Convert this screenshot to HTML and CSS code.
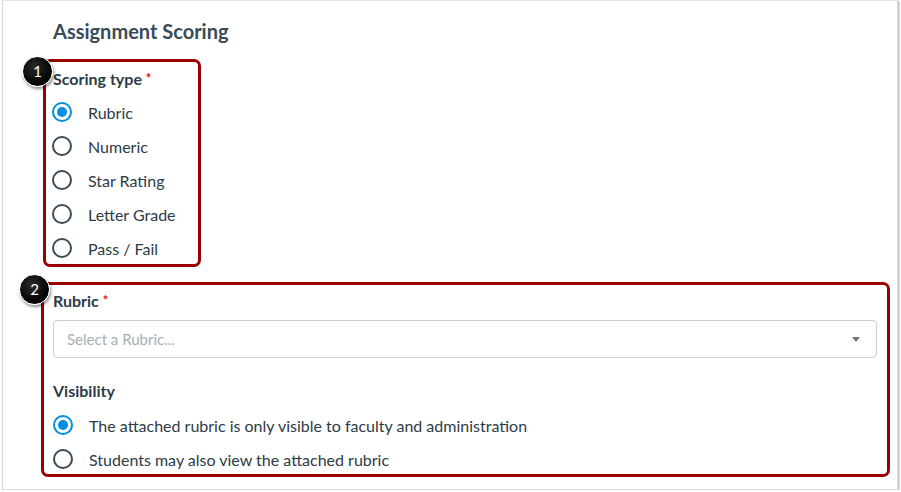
FILE: index.html
```html
<!DOCTYPE html>
<html lang="en">
<head>
<meta charset="utf-8">
<title>Assignment Scoring</title>
<link rel="stylesheet" href="styles.css">
</head>
<body>
<div class="card">
  <h2 class="title">Assignment Scoring</h2>

  <div class="highlight box1">
    <span class="badge">1</span>
    <div class="field-label">Scoring type <span class="req">*</span></div>
    <div class="radio-list">
      <label class="radio"><span class="dot checked"></span><span>Rubric</span></label>
      <label class="radio"><span class="dot"></span><span>Numeric</span></label>
      <label class="radio"><span class="dot"></span><span>Star Rating</span></label>
      <label class="radio"><span class="dot"></span><span>Letter Grade</span></label>
      <label class="radio"><span class="dot"></span><span>Pass / Fail</span></label>
    </div>
  </div>

  <div class="highlight box2">
    <span class="badge">2</span>
    <div class="field-label">Rubric <span class="req">*</span></div>
    <div class="select">
      <span class="placeholder">Select a Rubric...</span>
      <span class="caret"></span>
    </div>
    <div class="field-label vis">Visibility</div>
    <div class="radio-list">
      <label class="radio"><span class="dot checked"></span><span>The attached rubric is only visible to faculty and administration</span></label>
      <label class="radio"><span class="dot"></span><span>Students may also view the attached rubric</span></label>
    </div>
  </div>
</div>
</body>
</html>
```

FILE: styles.css
```css
html, body {
  margin: 0;
  padding: 0;
  background: #ffffff;
}

body {
  font-family: Lato, "Open Sans", "Liberation Sans", sans-serif;
  color: #2d3b45;
}

.card {
  box-sizing: border-box;
  margin-left: 2px;
  width: 896px;
  height: 490px;
  border: 1px solid #dcdcdc;
  border-top-color: #e6e6e6;
  box-shadow: 1px 1px 2px rgba(0, 0, 0, 0.35);
  padding: 18px 0 0 38px;
  background: #fff;
}

.title {
  margin: 0 0 16px 12px;
  font-size: 20px;
  line-height: 24px;
  font-weight: 700;
  color: #394b58;
}

.highlight {
  position: relative;
  box-sizing: border-box;
  border: 3px solid #990000;
  border-radius: 7px;
}

.box1 {
  margin-left: 2px;
  width: 158px;
  height: 208px;
  padding: 7px 0 0 6px;
}

.box2 {
  margin-top: 15px;
  width: 849px;
  height: 195px;
  padding: 6px 0 0 9px;
}

.badge {
  position: absolute;
  width: 29px;
  height: 29px;
  border-radius: 50%;
  background: radial-gradient(circle at 40% 35%, #2a2a2a, #000 70%);
  color: #fff;
  font-size: 15px;
  line-height: 29px;
  text-align: center;
  box-shadow: 1px 2px 3px rgba(0, 0, 0, 0.45);
  border: 1px solid #fff;
}

.box1 .badge {
  left: -24px;
  top: -6px;
}

.box2 .badge {
  left: -25px;
  top: -11px;
}

.field-label {
  font-size: 16px;
  line-height: 20px;
  height: 20px;
  font-weight: 700;
  color: #2d3b45;
}

.box1 .field-label {
  margin-left: 1px;
  margin-bottom: 13px;
}

.req {
  color: #ee0612;
  font-size: 13px;
  line-height: 0;
  vertical-align: 2px;
}

.radio-list {
  display: flex;
  flex-direction: column;
  gap: 14px;
}

.radio {
  display: flex;
  align-items: center;
  gap: 16px;
  height: 20px;
  font-size: 16px;
  color: #2d3b45;
}

.dot {
  box-sizing: border-box;
  flex: none;
  width: 20px;
  height: 20px;
  border: 2px solid #394b58;
  border-radius: 50%;
  position: relative;
}

.dot.checked {
  border-color: #008ee2;
}

.dot.checked::after {
  content: "";
  position: absolute;
  left: 3px;
  top: 3px;
  width: 10px;
  height: 10px;
  border-radius: 50%;
  background: #008ee2;
}

.select {
  box-sizing: border-box;
  display: flex;
  align-items: center;
  justify-content: space-between;
  margin-top: 9px;
  width: 824px;
  height: 38px;
  border: 1px solid #c7cdd1;
  border-radius: 4px;
  padding: 0 16px 0 13px;
}

.placeholder {
  font-size: 15px;
  color: #a5afb5;
}

.caret {
  width: 0;
  height: 0;
  border-left: 4px solid transparent;
  border-right: 4px solid transparent;
  border-top: 5px solid #6b7780;
}

.vis {
  margin-top: 23px;
}

.box2 .radio-list {
  margin-top: 14px;
}
```
